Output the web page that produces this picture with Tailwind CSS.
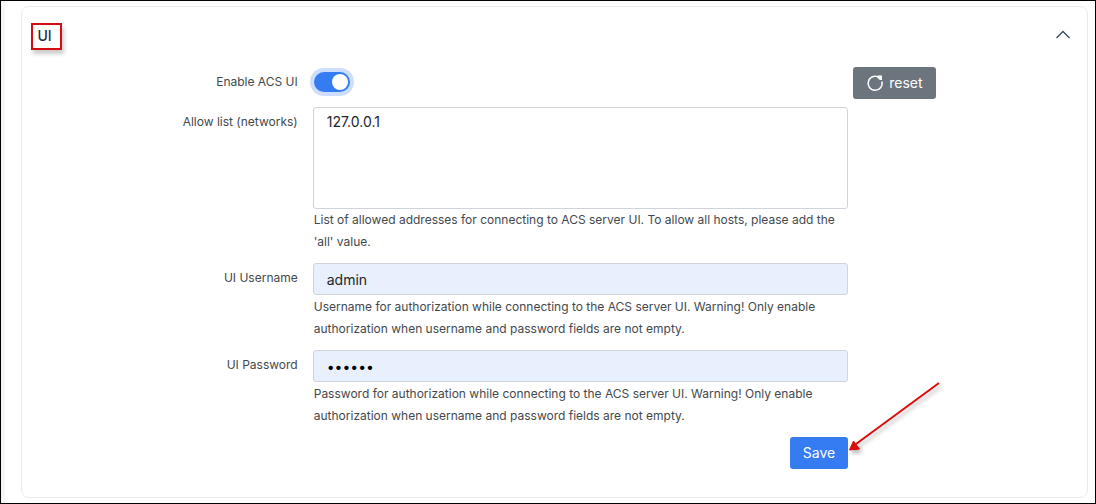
<!DOCTYPE html>
<html lang="en">
<head>
<meta charset="utf-8">
<meta name="viewport" content="width=device-width, initial-scale=1">
<title>UI settings</title>
<script src="https://cdn.jsdelivr.net/npm/@tailwindcss/browser@4"></script>
</head>
<body class="flex min-h-screen border border-black bg-white font-['Inter','Liberation_Sans',sans-serif] text-[#43484d]">
<div class="w-1 shrink-0 bg-[#f5f4f9]"></div>
<main class="flex grow pt-[5px] pr-[7px] pb-[5px] pl-4">
  <section class="grow rounded-lg border border-[#ebebeb]">
    <header class="flex h-[60px] items-center justify-between pr-4 pb-0.5 pl-[9px]">
      <h2 class="flex h-[27px] w-[31px] items-center justify-center border-2 border-[#d40d12] pr-1 text-sm font-medium text-[#212f4d] shadow-[2px_4px_4px_rgba(0,0,0,0.2)]">UI</h2>
      <button type="button" aria-label="Collapse section" class="mb-1">
        <svg class="h-4 w-4" viewBox="0 0 16 16" fill="none" stroke="#34495e" stroke-width="1.3"><path d="M1.500 12 8 5.500l6.500 6.500"/></svg>
      </button>
    </header>
    <form class="flex flex-col gap-[10px] text-xs">
      <div class="grid h-8 grid-cols-[291fr_536fr_239fr]">
        <label for="enable" class="pt-1 pr-[15px] text-right leading-[22px]">Enable ACS UI</label>
        <div class="flex items-center pb-0.5">
          <input id="enable" type="checkbox" role="switch" checked class="ml-px h-5 w-9 appearance-none rounded-full bg-[#357bf2] shadow-[0_0_0_4px_#cddefc] before:mt-0.5 before:ml-[18px] before:block before:h-4 before:w-4 before:rounded-full before:bg-white">
        </div>
        <div class="pl-[5px]">
          <button type="button" class="flex h-8 items-center gap-[5px] rounded-[3px] bg-[#6c757d] px-[13px] text-sm text-white">
            <svg class="h-[18px] w-[18px]" viewBox="0 0 18 18" fill="none" stroke="currentColor" stroke-width="1.5"><path d="M13.500 3.800A7 7 0 1 0 15.900 7.500"/><path d="M11.500 1.500h4.500v4.500h-2.200l-2.300-2z" fill="currentColor" stroke="none"/></svg>
            reset
          </button>
        </div>
      </div>
      <div class="-mt-0.5 grid grid-cols-[291fr_536fr_239fr]">
        <label for="networks" class="pt-1 pr-[15px] text-right leading-[22px]">Allow list (networks)</label>
        <div>
          <textarea id="networks" class="block h-[102px] w-full resize-none rounded-[3px] border border-[#ced4da] px-[13px] py-[3px] text-sm leading-[22px] text-[#212529]">127.0.0.1</textarea>
          <p class="pl-px leading-[22px]">List of allowed addresses for connecting to ACS server UI. To allow all hosts, please add the 'all' value.</p>
        </div>
      </div>
      <div class="grid grid-cols-[291fr_536fr_239fr]">
        <label for="username" class="pt-1 pr-[15px] text-right leading-[22px]">UI Username</label>
        <div>
          <input id="username" type="text" value="admin" class="block h-8 w-full rounded-[3px] border border-[#ced4da] bg-[#e8f0fe] px-[13px] text-sm text-[#212529]">
          <p class="mt-px pl-px leading-[22px]">Username for authorization while connecting to the ACS server UI. Warning! Only enable authorization when username and password fields are not empty.</p>
        </div>
      </div>
      <div class="grid grid-cols-[291fr_536fr_239fr]">
        <label for="password" class="pt-1 pr-[15px] text-right leading-[22px]">UI Password</label>
        <div>
          <input id="password" type="password" value="secret" class="block h-8 w-full rounded-[3px] border border-[#ced4da] bg-[#e8f0fe] px-[13px] text-sm text-black">
          <p class="mt-px pl-px leading-[22px]">Password for authorization while connecting to the ACS server UI. Warning! Only enable authorization when username and password fields are not empty.</p>
        </div>
      </div>
      <div class="grid grid-cols-[291fr_536fr_239fr]">
        <div class="col-start-2 flex justify-end">
          <div class="relative">
            <button type="submit" class="h-8 rounded-[3px] bg-[#357bf2] px-[13px] text-sm text-white">Save</button>
            <svg class="absolute bottom-2 left-full h-20 w-24 drop-shadow-[2px_3px_2px_rgba(0,0,0,0.3)]" viewBox="0 0 96 80"><path d="M91 2 8 63" stroke="#d90b0b" stroke-width="2"/><path d="M1.500 69 5.500 60l6 8z" fill="#d90b0b" stroke="#d90b0b"/></svg>
          </div>
        </div>
      </div>
    </form>
  </section>
</main>
</body>
</html>
